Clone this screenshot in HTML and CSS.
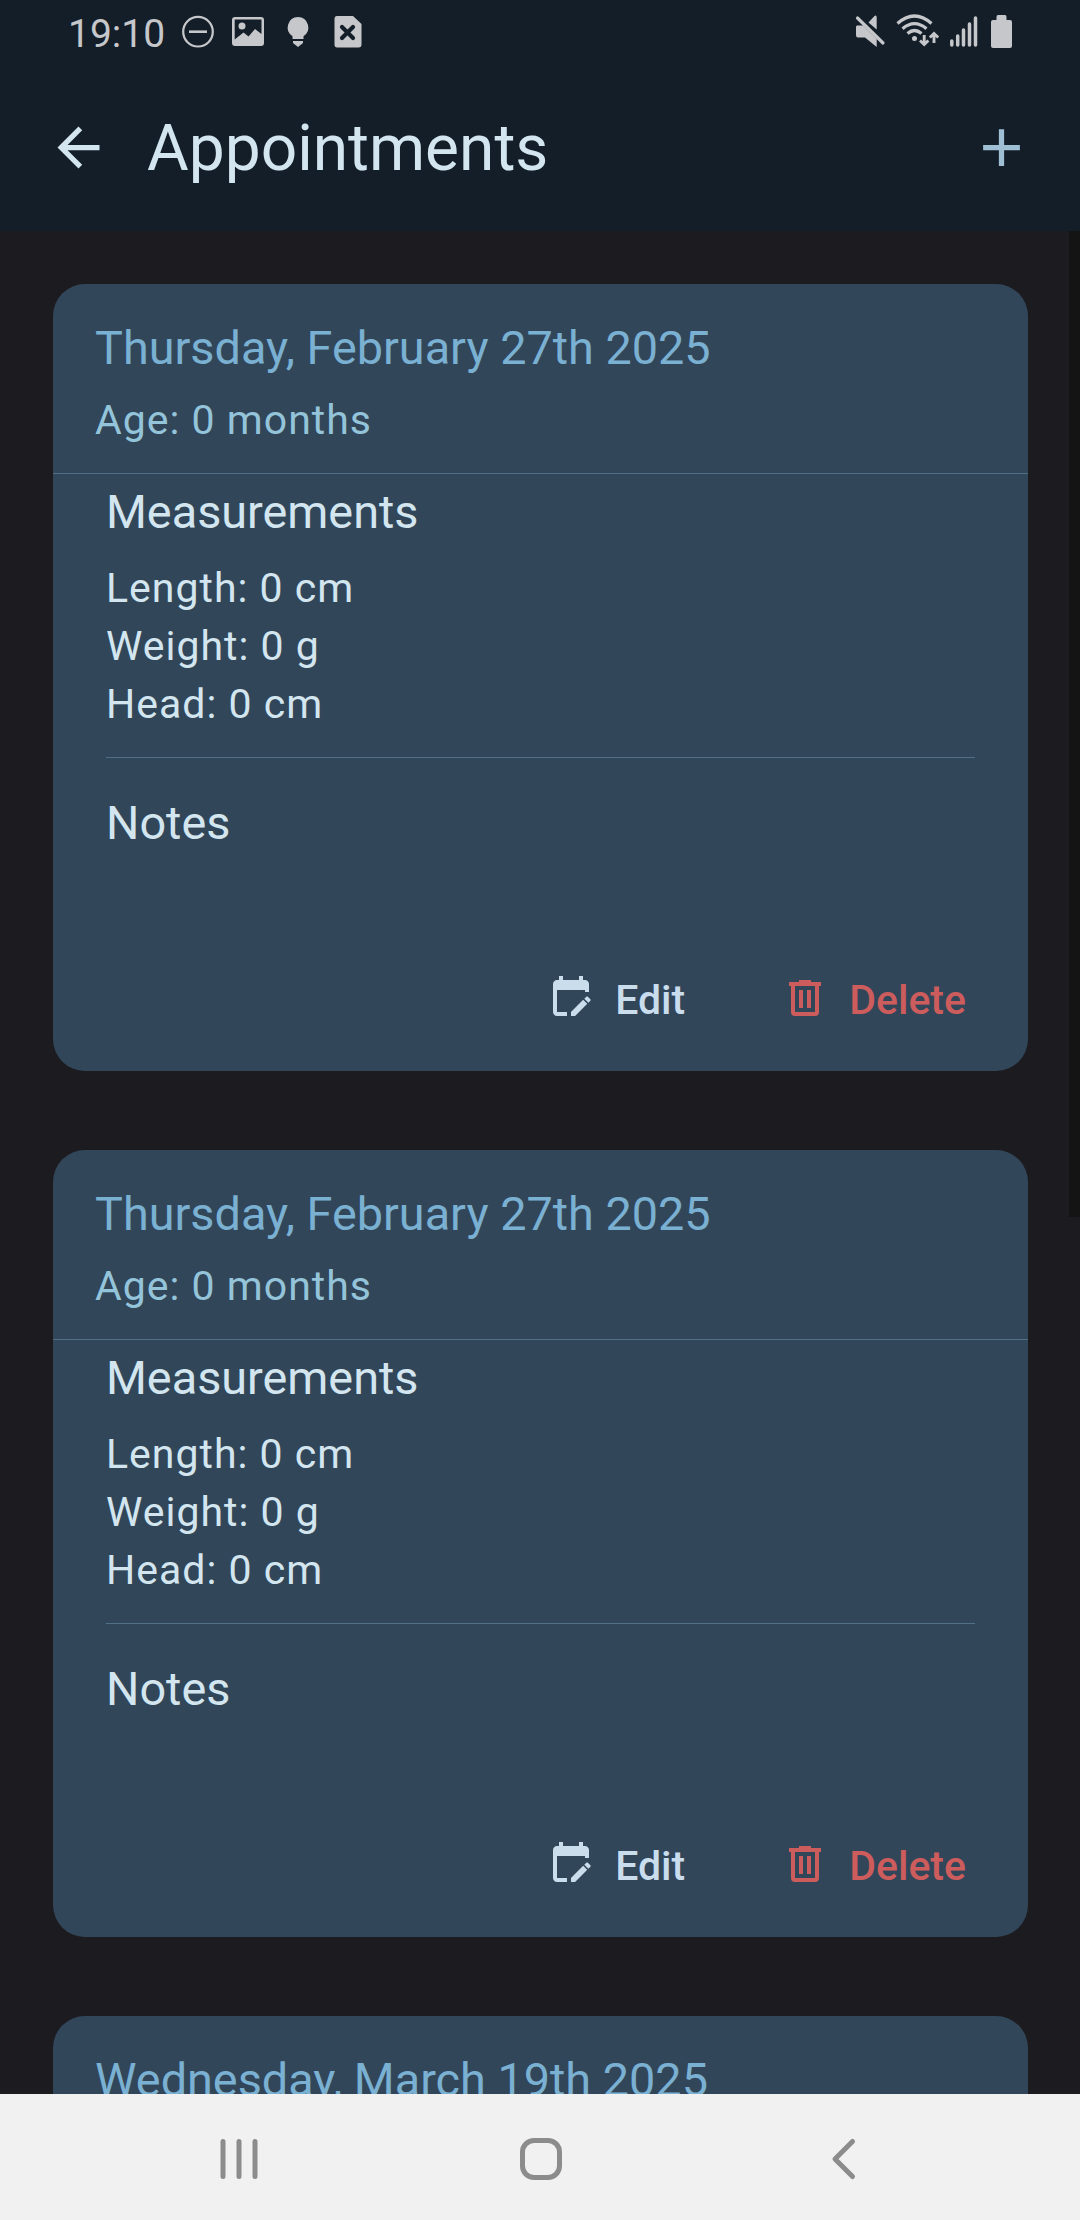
FILE: index.html
```html
<!DOCTYPE html>
<html lang="en">
<head>
<meta charset="utf-8">
<title>Appointments</title>
<link rel="stylesheet" href="styles.css">
</head>
<body>
<svg class="defs" aria-hidden="true">
  <symbol id="calendar-edit" viewBox="0 0 24 24"><path d="M19 3H18V1H16V3H8V1H6V3H5C3.9 3 3 3.9 3 5V19C3 20.11 3.9 21 5 21H10V19H5V8H19V9H21V5C21 3.9 20.11 3 19 3M21.7 13.35L20.7 14.35L18.65 12.35L19.65 11.35C19.85 11.14 20.19 11.13 20.42 11.35L21.7 12.63C21.89 12.83 21.89 13.15 21.7 13.35M12 18.94L18.07 12.88L20.12 14.88L14.06 21H12V18.94Z"/></symbol>
  <symbol id="trash" viewBox="0 0 24 24"><path d="M9,3V4H4V6H5V19A2,2 0 0,0 7,21H17A2,2 0 0,0 19,19V6H20V4H15V3H9M7,6H17V19H7V6M9,8V17H11V8H9M13,8V17H15V8H13Z"/></symbol>
</svg>
<div class="screen">
  <header class="top">
    <div class="status">
      <span class="clock">19:10</span>
      <svg class="status-left" width="182" height="36" viewBox="181 14 182 36">
        <circle cx="198" cy="31.7" r="14.8" fill="none" stroke="currentColor" stroke-width="2.2"/>
        <path d="M189 31.7H207" stroke="currentColor" stroke-width="2.6"/>
        <path fill-rule="evenodd" d="M235 17H261Q264 17 264 20V43Q264 46 261 46H235Q232 46 232 43V20Q232 17 235 17ZM234.700 19.500V39.500L243.500 32.500L248.500 36.500L255 29L261.500 34V19.500ZM242 22.500a3.500 3.500 0 1 1 0 7a3.500 3.500 0 1 1 0-7Z"/>
        <path d="M298 17a10.500 10.500 0 0 1 5.500 19.300V39h-11V36.300A10.500 10.500 0 0 1 298 17ZM293 41h10v2l-5 4l-5-4Z"/>
        <path d="M337 16H353L361.500 24V44.500Q361.500 47.500 358.500 47.500H337Q334.500 47.500 334.500 44.500V19Q334.500 16 337 16Z"/>
        <path d="M342 27L353 38M353 27L342 38" stroke="#141e28" stroke-width="4.200" stroke-linecap="round"/>
      </svg>
      <svg class="status-right" width="160" height="36" viewBox="854 14 160 36">
        <path d="M857 25.500H863L876.700 39V47L865 37.500H858Q856 37.500 856 35V27.500Q856 25.500 857 25.500ZM868.500 22.500L874.500 16Q876.700 14.500 876.700 18V29.500Z"/>
        <path d="M857.500 18L883 43" stroke="currentColor" stroke-width="3.200" stroke-linecap="round"/>
        <g fill="none" stroke="currentColor" stroke-width="3.200">
          <path d="M897.500 23.500Q914.500 8.500 931.500 23.500M902.500 28.700Q914.500 18.500 926.500 28.700M907.500 33.500Q914.500 27.500 921.500 33.500"/>
          <path d="M924.200 35V44M920 40.500L924.200 44.500L928.400 40.500M934 43V34M929.800 37.500L934 33.500L938.200 37.500" stroke-width="2.900"/>
          <path d="M951.800 41V45M957.700 36V45M963.500 30V45M969.500 24V45M975.500 18V45" stroke-width="3.500" stroke-linecap="round"/>
        </g>
        <circle cx="914.500" cy="38.500" r="2.500"/>
        <path d="M998 15H1005Q1006.500 15 1006.500 17V20H1010Q1012 20 1012 22V46Q1012 48 1010 48H993Q991 48 991 46V22Q991 20 993 20H996.500V17Q996.500 15 998 15Z"/>
      </svg>
    </div>
    <div class="appbar">
      <svg class="back" viewBox="0 0 24 24"><path d="M20 11H7.830l5.590-5.590L12 4l-8 8 8 8 1.410-1.410L7.830 13H20v-2z"/></svg>
      <h1>Appointments</h1>
      <svg class="add" viewBox="0 0 24 24"><path d="M19 13H13V19H11V13H5V11H11V5H13V11H19V13Z"/></svg>
    </div>
  </header>

  <main class="list">
    <article class="card">
      <div class="card-head">
        <h2>Thursday, February 27th 2025</h2>
        <p class="age">Age: 0 months</p>
      </div>
      <div class="card-body">
        <h3>Measurements</h3>
        <ul class="measures"><li>Length: 0 cm</li><li>Weight: 0 g</li><li>Head: 0 cm</li></ul>
        <h3 class="notes">Notes</h3>
      </div>
      <div class="actions">
        <button class="btn edit"><svg><use href="#calendar-edit"/></svg><span>Edit</span></button>
        <button class="btn delete"><svg><use href="#trash"/></svg><span>Delete</span></button>
      </div>
    </article>
    <article class="card">
      <div class="card-head">
        <h2>Thursday, February 27th 2025</h2>
        <p class="age">Age: 0 months</p>
      </div>
      <div class="card-body">
        <h3>Measurements</h3>
        <ul class="measures"><li>Length: 0 cm</li><li>Weight: 0 g</li><li>Head: 0 cm</li></ul>
        <h3 class="notes">Notes</h3>
      </div>
      <div class="actions">
        <button class="btn edit"><svg><use href="#calendar-edit"/></svg><span>Edit</span></button>
        <button class="btn delete"><svg><use href="#trash"/></svg><span>Delete</span></button>
      </div>
    </article>
    <article class="card">
      <div class="card-head">
        <h2>Wednesday, March 19th 2025</h2>
      </div>
    </article>
    <div class="scrollbar"></div>
  </main>

  <nav class="navbar">
    <svg width="44" height="44" viewBox="0 0 44 44"><path d="M6 4.500V39.500M22 4.500V39.500M38 4.500V39.500"/></svg>
    <svg width="44" height="44" viewBox="0 0 44 44"><rect x="3.500" y="3.500" width="37" height="37" rx="11.500"/></svg>
    <svg width="44" height="44" viewBox="0 0 44 44"><path d="M31.500 4.500L14 22L31.500 39.500"/></svg>
  </nav>
</div>
</body>
</html>
```
FILE: styles.css
```css
* { box-sizing: border-box; margin: 0; padding: 0; }

body {
  background: #1c1b1f;
  color: #d3e6f0;
  font-family: Roboto, "Liberation Sans", sans-serif;
}

svg { display: block; flex: none; fill: currentColor; }
.defs { position: absolute; width: 0; height: 0; }

.screen {
  width: 1080px;
  height: 2220px;
  display: flex;
  flex-direction: column;
  overflow: hidden;
}

/* Status bar and app bar */
.top { height: 231px; flex: none; background: #141e28; }

.status {
  height: 64px;
  padding: 0 66px 0 68px;
  display: flex;
  align-items: center;
  color: #c5c7ca;
}
.clock { width: 113px; font-size: 39px; line-height: 64px; padding-top: 4px; white-space: nowrap; }
.status-right { margin-left: auto; }

.appbar {
  height: 167px;
  padding: 0 47px;
  display: flex;
  align-items: center;
}
.appbar svg { width: 63px; height: 63px; }
.appbar h1 { margin-left: 37px; padding-top: 2px; font-size: 64px; font-weight: 400; line-height: 80px; }
.add { margin-left: auto; color: #9fbfd5; }

/* Appointment list */
.list {
  position: relative;
  flex: 1;
  min-height: 0;
  overflow: hidden;
  padding: 53px 52px 0 53px;
  display: flex;
  flex-direction: column;
  gap: 79px;
}
.scrollbar {
  position: absolute;
  top: 0;
  right: 0;
  width: 11px;
  height: 986px;
  background: #141415;
}

.card { flex: none; background: #32465a; border-radius: 32px; }

.card-head { padding: 34px 42px 28px; }
.card-head:not(:last-child) { border-bottom: 1px solid #507085; }
.card-head h2 { font-size: 46.8px; font-weight: 400; line-height: 60px; color: #7ab0d1; }
.age { margin-top: 17px; font-size: 41px; line-height: 50px; letter-spacing: 1px; color: #94c4d9; }

.card-body { padding: 8px 53px 0; }
.card-body h3 { font-size: 46.8px; font-weight: 400; line-height: 60px; }
.measures {
  list-style: none;
  padding: 17px 0 24px;
  border-bottom: 1px solid #507085;
  font-size: 41px;
  line-height: 58px;
  letter-spacing: 1px;
}
.card-body .notes { margin-top: 35px; }

.actions {
  padding: 121px 62px 49px 0;
  display: flex;
  justify-content: flex-end;
  gap: 96px;
}
.btn {
  height: 48px;
  display: flex;
  align-items: center;
  border: 0;
  background: none;
  font: 500 41px/48px Roboto, "Liberation Sans", sans-serif;
}
.btn svg { width: 48px; height: 48px; margin-right: 20px; }
.btn span { padding-top: 4px; }
.edit { color: #c9dded; }
.delete { color: #cd5c5c; }

/* System navigation */
.navbar {
  flex: none;
  height: 126px;
  padding: 4px 215px 0 217px;
  display: flex;
  align-items: center;
  justify-content: space-between;
  background: #f1f1f1;
  color: #8c8c8c;
}
.navbar svg { fill: none; stroke: currentColor; stroke-width: 5; stroke-linecap: round; stroke-linejoin: round; }
```
